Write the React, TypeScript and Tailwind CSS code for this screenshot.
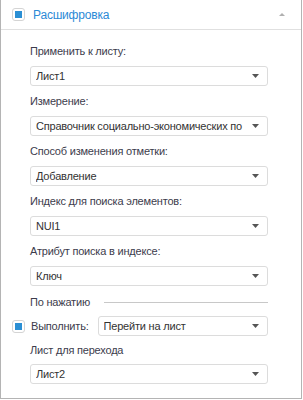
import React from "react"

const font = { fontFamily: '"Liberation Sans", Arial, sans-serif' }

function Arrow() {
  return (
    <svg width="7" height="4" viewBox="0 0 7 4" className="shrink-0">
      <path d="M0 0 L7 0 L3.5 4 Z" fill="#555" />
    </svg>
  )
}

function Select({ value, className = "" }: { value: string; className?: string }) {
  return (
    <div
      className={`flex h-[20px] items-center rounded-[3px] border border-[#dcdcdc] bg-white pl-[5px] pr-[8px] ${className}`}
    >
      <span className="flex-1 overflow-hidden whitespace-nowrap text-[11px] tracking-[-0.2px] text-[#333]">
        {value}
      </span>
      <Arrow />
    </div>
  )
}

function Check() {
  return (
    <div className="flex h-[13px] w-[13px] items-center justify-center rounded-[3px] border border-[#d4d4d4] bg-white">
      <div className="h-[7px] w-[7px] bg-[#2b8fd4]" />
    </div>
  )
}

function Field({ label, value }: { label: string; value: string }) {
  return (
    <div className="flex flex-col">
      <div className="flex h-[30px] items-center pt-[1px] text-[11px] tracking-[-0.2px] text-[#3c3c4c]">
        {label}
      </div>
      <Select value={value} />
    </div>
  )
}

export default function App() {
  return (
    <div
      style={font}
      className="flex h-[399px] w-[302px] flex-col border-x border-b border-[#b4b4b4] bg-white"
    >
      {/* Header */}
      <div className="flex h-[30px] shrink-0 items-center border-b border-[#e0e0e0] pl-[11px] pr-[16px]">
        <Check />
        <span className="ml-[8px] flex-1 text-[12px] tracking-[-0.2px] text-[#2b8ad6]">Расшифровка</span>
        <svg width="6" height="3" viewBox="0 0 6 3">
          <path d="M0 3 L6 3 L3 0 Z" fill="#b0b0b0" />
        </svg>
      </div>

      <div className="flex flex-col pl-[29px] pr-[33px] pt-[6px]">
        <Field label="Применить к листу:" value="Лист1" />
        <Field label="Измерение:" value="Справочник социально-экономических по" />
        <Field label="Способ изменения отметки:" value="Добавление" />
        <Field label="Индекс для поиска элементов:" value="NUI1" />
        <Field label="Атрибут поиска в индексе:" value="Ключ" />

        <div className="flex h-[30px] items-center pt-[2px]">
          <span className="text-[11px] tracking-[-0.2px] text-[#3c3c4c]">По нажатию</span>
          <div className="ml-[14px] h-px flex-1 bg-[#c8c8c8]" />
        </div>
      </div>

      <div className="flex items-center pl-[11px] pr-[33px]">
        <Check />
        <span className="ml-[6px] text-[11px] tracking-[-0.2px] text-[#3c3c4c]">Выполнить:</span>
        <Select value="Перейти на лист" className="ml-[9px] flex-1" />
      </div>

      <div className="flex flex-col pl-[29px] pr-[33px]">
        <div className="flex h-[28px] items-center text-[11px] tracking-[-0.2px] text-[#3c3c4c]">Лист для перехода</div>
        <Select value="Лист2" />
      </div>
    </div>
  )
}
